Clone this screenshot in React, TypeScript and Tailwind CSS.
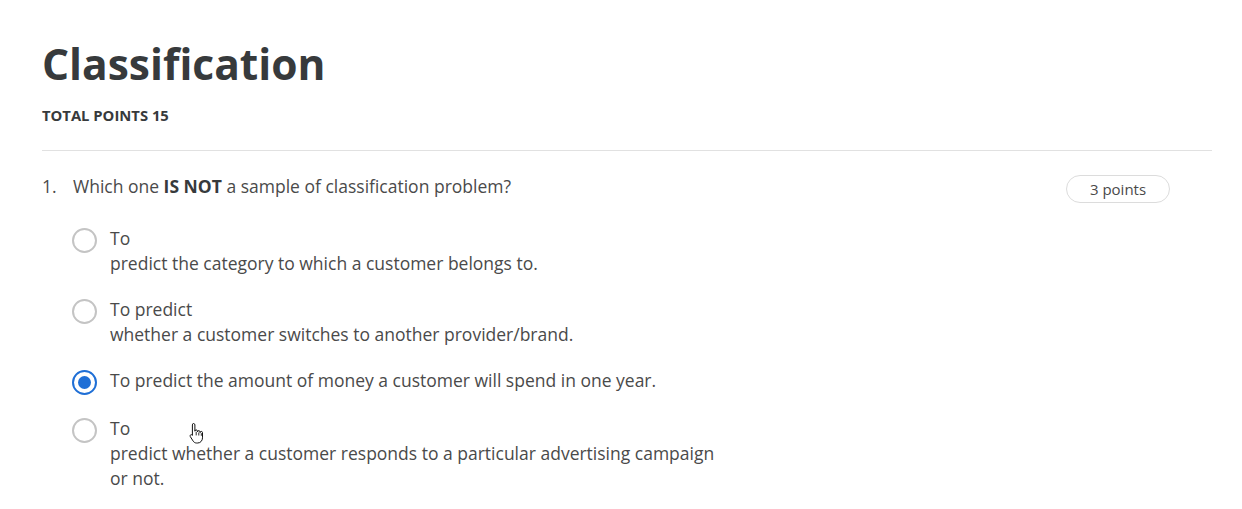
import React from "react";

const options = [
  { lines: ["To", "predict the category to which a customer belongs to."], checked: false },
  { lines: ["To predict", "whether a customer switches to another provider/brand."], checked: false },
  { lines: ["To predict the amount of money a customer will spend in one year."], checked: true },
  {
    lines: ["To", "predict whether a customer responds to a particular advertising campaign", "or not."],
    checked: false,
  },
];

function Radio({ checked }: { checked: boolean }) {
  if (checked) {
    return (
      <span className="flex h-[25px] w-[25px] shrink-0 items-center justify-center rounded-full border-2 border-[#1f6fd6] bg-white">
        <span className="block h-[13px] w-[13px] rounded-full bg-[#1f6fd6]" />
      </span>
    );
  }
  return <span className="block h-[25px] w-[25px] shrink-0 rounded-full border-2 border-[#c4c4c4] bg-white" />;
}

function HandCursor() {
  return (
    <svg width="16" height="22" viewBox="0 0 16 22" className="absolute left-[189px] top-[422px]">
      <path
        d="M4.5 1.5c.8 0 1.4.6 1.4 1.4v6.3c0-.8.6-1.3 1.3-1.3s1.3.6 1.3 1.3v.7c0-.8.6-1.3 1.3-1.3s1.3.6 1.3 1.3v.7c0-.7.6-1.2 1.2-1.2.7 0 1.2.6 1.2 1.2v5.2c0 2.8-2 5.2-4.8 5.2H7.4c-1.5 0-2.6-.9-3.4-2.1L1.3 14.6c-.4-.7-.2-1.5.5-1.8.6-.3 1.3-.1 1.7.5l-.1 0V2.9c0-.8.3-1.4 1.1-1.4z"
        fill="#fff"
        stroke="#111"
        strokeWidth="1"
        strokeLinejoin="round"
      />
      <path d="M7.2 9.8v3.6M9.8 10.5v3M12.3 11.2v2.6" stroke="#111" strokeWidth="0.9" />
    </svg>
  );
}

export default function App() {
  return (
    <div
      className="relative min-h-[509px] bg-white pl-[42px] pr-[30px] pt-[36px] text-[#444]"
      style={{ fontFamily: '"Open Sans", "Noto Sans", sans-serif' }}
    >
      <h1 className="text-[42.5px] font-bold leading-[56px] text-[#373a3c]">Classification</h1>
      <div className="mt-[13px] text-[14.8px] font-bold leading-[20px] text-[#373a3c]">TOTAL POINTS 15</div>
      <div className="mt-[25px] h-px bg-[#e1e1e1]" />
      <div className="mt-[23px] flex items-start">
        <div className="flex flex-1 text-[17.5px] leading-[25.5px] text-[#4a4a4a]">
          <span className="w-[31px]">1.</span>
          <span>
            Which one <b className="font-bold text-[#373a3c]">IS NOT</b> a sample of classification problem?
          </span>
        </div>
        <div className="mr-[42px] mt-[1px] flex h-[28px] w-[104px] items-center justify-center rounded-full border border-[#dcdcdc] text-[15px] text-[#4a4a4a]">
          3 points
        </div>
      </div>
      <div className="mt-[23px] flex flex-col gap-[21px] pl-[30px]">
        {options.map((o, i) => (
          <div key={i} className="flex items-start gap-[13px]">
            <div className="pt-[2px]">
              <Radio checked={o.checked} />
            </div>
            <div className="text-[17.5px] leading-[25px] text-[#4a4a4a]">
              {o.lines.map((l, j) => (
                <div key={j}>{l}</div>
              ))}
            </div>
          </div>
        ))}
      </div>
      <HandCursor />
    </div>
  );
}
